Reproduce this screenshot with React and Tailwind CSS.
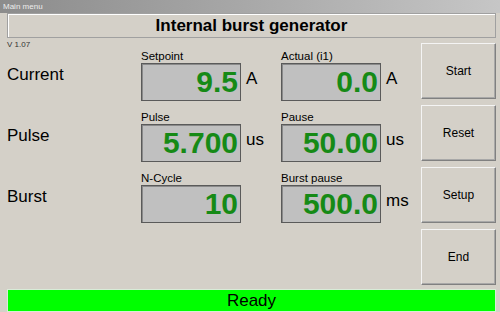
export default function App() {
  const rows = [
    {
      name: "Current",
      a: { label: "Setpoint", value: "9.5", unit: "A" },
      b: { label: "Actual (i1)", value: "0.0", unit: "A" },
    },
    {
      name: "Pulse",
      a: { label: "Pulse", value: "5.700", unit: "us" },
      b: { label: "Pause", value: "50.00", unit: "us" },
    },
    {
      name: "Burst",
      a: { label: "N-Cycle", value: "10", unit: "" },
      b: { label: "Burst pause", value: "500.0", unit: "ms" },
    },
  ];

  const buttons = ["Start", "Reset", "Setup", "End"];

  const Field = ({ f }) => (
    <div className="flex flex-col w-[140px]">
      <div className="h-[13px] text-[11.5px] leading-[13px] text-black">{f.label}</div>
      <div className="flex items-center">
        <div className="w-[100px] h-[38px] bg-[#c0c0c0] border border-[#5a5a5a] shadow-[inset_1px_1px_0_#8a8a8a] flex items-center justify-end pr-[2px]">
          <span className="text-[30px] font-bold leading-none text-[#168a16]">{f.value}</span>
        </div>
        <span className="ml-[5px] pb-[7px] text-[17px] leading-none text-black">{f.unit}</span>
      </div>
    </div>
  );

  return (
    <div
      className="w-[500px] h-[312px] bg-[#d4d0c8] flex flex-col overflow-hidden"
      style={{ fontFamily: '"Liberation Sans", Arial, sans-serif' }}
    >
      {/* window caption */}
      <div className="h-[13px] bg-gradient-to-r from-[#8c8c8c] to-[#c6c6c6] flex items-center px-[3px]">
        <span className="text-[8px] leading-none text-[#ececec]">Main menu</span>
      </div>

      {/* heading panel */}
      <div className="mx-[7px] mr-[4px] h-[25px] border border-[#a0a0a0] shadow-[inset_1px_1px_0_#ffffff] flex items-center justify-center">
        <span className="text-[17px] font-bold text-black leading-none">Internal burst generator</span>
      </div>

      <div className="flex flex-1 px-[7px] pr-[4px]">
        {/* left side */}
        <div className="flex-1 flex flex-col">
          <div className="h-[12px] pt-[3px] text-[8px] leading-none text-[#333]">V 1.07</div>
          <div className="flex flex-col gap-[10px]">
            {rows.map((r) => (
              <div key={r.name} className="flex items-center">
                <div className="w-[134px] text-[17px] text-black leading-none pb-[3px]">{r.name}</div>
                <Field f={r.a} />
                <Field f={r.b} />
              </div>
            ))}
          </div>
        </div>

        {/* buttons */}
        <div className="w-[77px] flex flex-col gap-[6px] pt-[5px]">
          {buttons.map((b) => (
            <button
              key={b}
              className="h-[56px] bg-[#d4d0c8] border border-t-[#f4f4f4] border-l-[#f4f4f4] border-r-[#808080] border-b-[#808080] shadow-[inset_-1px_-1px_0_#a8a8a8] text-[12px] text-black flex items-center justify-center"
            >
              {b}
            </button>
          ))}
        </div>
      </div>

      {/* status bar */}
      <div className="mx-[7px] mr-[4px] mt-[4px] h-[23px] border border-[#d8ecd8] bg-[#00ff00] flex items-center justify-center">
        <span className="text-[17px] text-black leading-none">Ready</span>
      </div>
    </div>
  );
}
